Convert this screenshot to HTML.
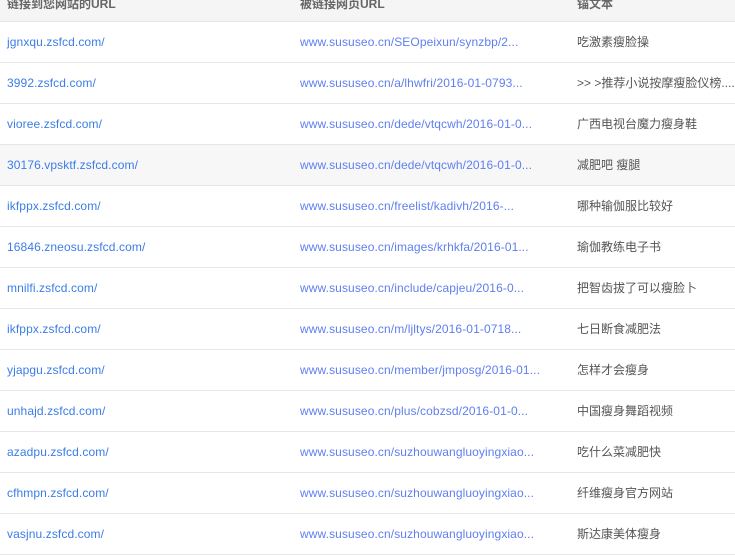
<!DOCTYPE html>
<html><head><meta charset="utf-8"><style>
body{margin:0;width:735px;height:553px;overflow:hidden;background:#fff;font-family:"Liberation Sans","Noto Sans CJK SC",sans-serif;font-size:12px}
.h{position:absolute;top:0;left:0;width:735px;height:21px;background:#f5f5f5;border-bottom:1px solid #e5e5e5}
.h span{position:absolute;top:-4px;font-weight:bold;color:#666;font-size:12px;line-height:16px}
.r{position:absolute;left:0;width:735px;height:40px;border-bottom:1px solid #e6e6e6;line-height:40px}
.r span{position:absolute;top:0;white-space:nowrap}
.a{left:7px;color:#3b7de8;letter-spacing:0.1px}.b{left:300px;color:#5f7ff0;letter-spacing:0.1px}.c{left:577px;color:#555}
</style></head><body>
<div class="h"><span style="left:7px">链接到您网站的URL</span><span style="left:300px">被链接网页URL</span><span style="left:577px">锚文本</span></div>
<div class="r" style="top:22px"><span class="a">jgnxqu.zsfcd.com/</span><span class="b">www.sususeo.cn/SEOpeixun/synzbp/2...</span><span class="c">吃激素瘦脸操</span></div>
<div class="r" style="top:63px"><span class="a">3992.zsfcd.com/</span><span class="b">www.sususeo.cn/a/lhwfri/2016-01-0793...</span><span class="c">&gt;&gt; &gt;推荐小说按摩瘦脸仪榜.....</span></div>
<div class="r" style="top:104px"><span class="a">vioree.zsfcd.com/</span><span class="b">www.sususeo.cn/dede/vtqcwh/2016-01-0...</span><span class="c">广西电视台魔力瘦身鞋</span></div>
<div class="r" style="top:145px;background:#f7f7f7"><span class="a">30176.vpsktf.zsfcd.com/</span><span class="b">www.sususeo.cn/dede/vtqcwh/2016-01-0...</span><span class="c">减肥吧 瘦腿</span></div>
<div class="r" style="top:186px"><span class="a">ikfppx.zsfcd.com/</span><span class="b">www.sususeo.cn/freelist/kadivh/2016-...</span><span class="c">哪种输伽服比较好</span></div>
<div class="r" style="top:227px"><span class="a">16846.zneosu.zsfcd.com/</span><span class="b">www.sususeo.cn/images/krhkfa/2016-01...</span><span class="c">瑜伽教练电子书</span></div>
<div class="r" style="top:268px"><span class="a">mnilfi.zsfcd.com/</span><span class="b">www.sususeo.cn/include/capjeu/2016-0...</span><span class="c">把智齿拔了可以瘦脸卜</span></div>
<div class="r" style="top:309px"><span class="a">ikfppx.zsfcd.com/</span><span class="b">www.sususeo.cn/m/ljltys/2016-01-0718...</span><span class="c">七日断食减肥法</span></div>
<div class="r" style="top:350px"><span class="a">yjapgu.zsfcd.com/</span><span class="b">www.sususeo.cn/member/jmposg/2016-01...</span><span class="c">怎样才会瘦身</span></div>
<div class="r" style="top:391px"><span class="a">unhajd.zsfcd.com/</span><span class="b">www.sususeo.cn/plus/cobzsd/2016-01-0...</span><span class="c">中国瘦身舞蹈视频</span></div>
<div class="r" style="top:432px"><span class="a">azadpu.zsfcd.com/</span><span class="b">www.sususeo.cn/suzhouwangluoyingxiao...</span><span class="c">吃什么菜减肥快</span></div>
<div class="r" style="top:473px"><span class="a">cfhmpn.zsfcd.com/</span><span class="b">www.sususeo.cn/suzhouwangluoyingxiao...</span><span class="c">纤维瘦身官方网站</span></div>
<div class="r" style="top:514px"><span class="a">vasjnu.zsfcd.com/</span><span class="b">www.sususeo.cn/suzhouwangluoyingxiao...</span><span class="c">斯达康美体瘦身</span></div>
</body></html>
